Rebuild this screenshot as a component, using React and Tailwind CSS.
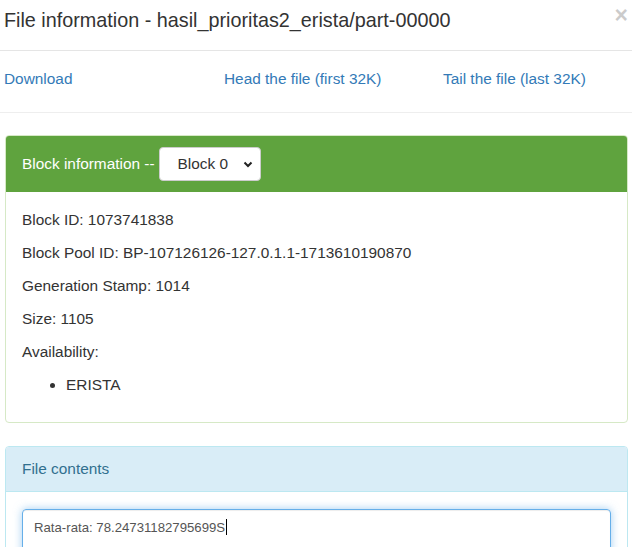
import React from "react";

const blockRows = [
	"Block ID: 1073741838",
	"Block Pool ID: BP-107126126-127.0.1.1-1713610190870",
	"Generation Stamp: 1014",
	"Size: 1105",
	"Availability:",
];

const App = () => {
	return (
		<div className="w-[632px] h-[547px] overflow-hidden bg-white text-[#333] font-['Liberation_Sans',Arial,sans-serif]">
			{/* modal header */}
			<div className="relative h-[51px] border-b border-[#e5e5e5] pl-[4px] pt-[9px]">
				<h4 className="text-[19.8px] leading-[22px] font-normal">
					File information - hasil_prioritas2_erista/part-00000
				</h4>
				<span className="absolute right-[4px] top-[4px] text-[23px] leading-[23px] font-bold text-black opacity-20">
					×
				</span>
			</div>

			{/* links */}
			<div className="flex h-[62px] items-start border-b border-[#eeeeee] pl-[4px] pt-[17px] text-[15.4px] leading-[22px] text-[#337ab7]">
				<a className="w-[220px]" href="#">
					Download
				</a>
				<a className="w-[219px]" href="#">
					Head the file (first 32K)
				</a>
				<a href="#">Tail the file (last 32K)</a>
			</div>

			{/* block information panel */}
			<div className="ml-[5px] mt-[22px] w-[623px] rounded-[4px] border border-[#d6e9c6]">
				<div className="flex h-[56px] items-center rounded-t-[3px] bg-[#5fa33e] px-[16px] text-[15.4px] text-white">
					<span>Block information --</span>
					<div className="ml-[4px] flex h-[34px] w-[102px] items-center justify-between rounded-[4px] border border-[#ccc] bg-white pl-[18px] pr-[6px] text-[#333]">
						<span>Block 0</span>
						<svg width="10" height="7" viewBox="0 0 10 7" className="mr-[1px]">
							<path d="M1.5 1.5l3.5 3.5 3.5-3.5" fill="none" stroke="#222" strokeWidth="2" />
						</svg>
					</div>
				</div>
				<div className="px-[16px] pt-[17px] pb-[15px] text-[15.4px] leading-[22px]">
					{blockRows.map((row) => (
						<p key={row} className="mb-[11px]">
							{row}
						</p>
					))}
					<ul className="mb-[11px] list-disc pl-[44px]">
						<li>ERISTA</li>
					</ul>
				</div>
			</div>

			{/* file contents panel */}
			<div className="ml-[5px] mt-[23px] w-[623px] rounded-[4px] border border-[#bce8f1]">
				<div className="rounded-t-[3px] border-b border-[#bce8f1] bg-[#d9edf7] px-[16px] py-[11px] text-[15.4px] leading-[22px] text-[#31708f]">
					File contents
				</div>
				<div className="px-[16px] pt-[17px] pb-[16px]">
					<div className="h-[110px] rounded-[4px] border border-[#66afe9] px-[11px] py-[6px] text-[13.2px] leading-[19px] text-[#555] shadow-[inset_0_1px_1px_rgba(0,0,0,0.075),0_0_8px_rgba(102,175,233,0.6)]">
						Rata-rata: 78.24731182795699S
						<span className="ml-[1px] inline-block h-[16px] w-px translate-y-[3px] bg-black" />
					</div>
				</div>
			</div>
		</div>
	);
};

export default App;
